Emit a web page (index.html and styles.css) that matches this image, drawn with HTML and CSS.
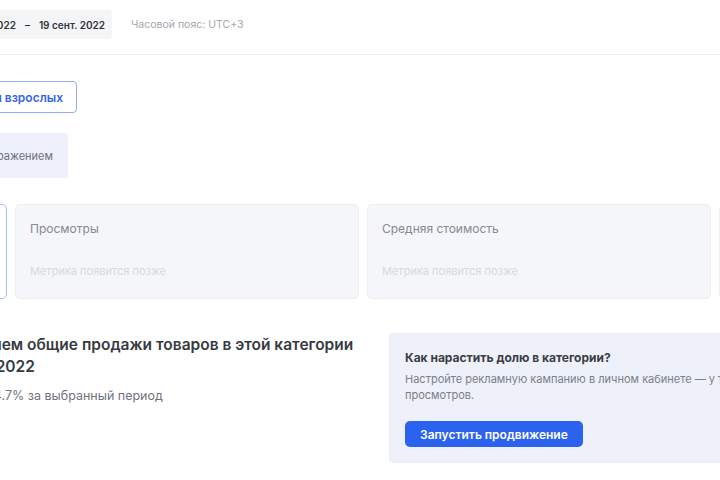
FILE: index.html
```html
<!DOCTYPE html>
<html lang="ru">
<head>
<meta charset="utf-8">
<link rel="stylesheet" href="styles.css">
</head>
<body>
<div class="page">
  <div class="toolbar">
    <div class="period-wrap">
      <div class="period">
        <span>12 сент. 2022</span><span class="dash">–</span><span>19 сент. 2022</span>
      </div>
    </div>
    <div class="tz">Часовой пояс: UTC+3</div>
  </div>

  <div class="filters">
    <button class="outline-btn">Для детей и взрослых</button>
  </div>

  <div class="chips">
    <div class="chip">Только с изображением</div>
  </div>

  <div class="cards">
    <div class="card card-active">
      <div class="card-title">Заказы</div>
      <div class="card-note">Метрика появится позже</div>
    </div>
    <div class="card">
      <div class="card-title">Просмотры</div>
      <div class="card-note">Метрика появится позже</div>
    </div>
    <div class="card">
      <div class="card-title">Средняя стоимость</div>
      <div class="card-note">Метрика появится позже</div>
    </div>
    <div class="card">
      <div class="card-title">Конверсия</div>
      <div class="card-note">Метрика появится позже</div>
    </div>
  </div>

  <div class="bottom">
    <div class="summary">
      <h2 class="summary-title">В среднем общие продажи товаров в этой категории<br>в сент. 2022</h2>
      <p class="summary-sub">Рост на 4.7% за выбранный период</p>
    </div>
    <div class="promo">
      <div class="promo-title">Как нарастить долю в категории?</div>
      <p class="promo-text">Настройте рекламную кампанию в личном кабинете — у товаров станет больше<br>просмотров.</p>
      <button class="promo-btn">Запустить продвижение</button>
    </div>
  </div>
</div>
</body>
</html>
```

FILE: styles.css
```css
* { box-sizing: border-box; }
html, body {
  margin: 0;
  padding: 0;
  background: #ffffff;
  overflow: hidden;
  width: 720px;
  height: 480px;
}
body {
  font-family: Inter, "Noto Sans", "Liberation Sans", sans-serif;
  color: #2f333a;
}
.page {
  width: 720px;
}
.toolbar {
  display: flex;
  align-items: center;
  gap: 19px;
  height: 55px;
  padding-top: 10px;
  padding-bottom: 15px;
  border-bottom: 1px solid #f1f1f3;
}
.period-wrap {
  flex: none;
  width: 112px;
  min-width: 0;
  display: flex;
  justify-content: flex-end;
}
.period {
  flex: none;
  height: 29px;
  display: flex;
  align-items: center;
  padding: 0 7px 0 8px;
  background: #f4f5f7;
  border-radius: 4px;
  font-size: 10px;
  font-weight: 600;
  color: #2f333a;
  white-space: nowrap;
}
.dash { margin: 0 9px; }
.tz {
  font-size: 10.5px;
  color: #a3a7ae;
  white-space: nowrap;
}
.filters {
  margin-top: 26px;
  width: 77px;
  display: flex;
  justify-content: flex-end;
}
.outline-btn {
  flex: none;
  height: 32px;
  padding: 0 13px;
  border: 1px solid #94adf3;
  border-radius: 4px;
  background: #fff;
  color: #3565e6;
  font-family: inherit;
  font-size: 12px;
  font-weight: 600;
  white-space: nowrap;
}
.chips {
  margin-top: 20px;
  width: 68px;
  display: flex;
  justify-content: flex-end;
}
.chip {
  flex: none;
  height: 45px;
  display: flex;
  align-items: center;
  padding: 0 15px;
  background: #eef1fb;
  border-radius: 3px;
  font-size: 11px;
  color: #6b707c;
  white-space: nowrap;
}
.cards {
  margin-top: 26px;
  margin-left: -337px;
  display: flex;
  gap: 8px;
}
.card {
  flex: 0 0 344px;
  height: 95px;
  padding: 16px 14px;
  background: #f4f6f9;
  border: 1px solid #eceef2;
  border-radius: 5px;
  display: flex;
  flex-direction: column;
  justify-content: space-between;
}
.card-active {
  background: #ffffff;
  border-color: #a8bef5;
}
.card-title {
  font-size: 12px;
  color: #858a94;
  line-height: 16px;
}
.card-note {
  font-size: 11px;
  color: #d6d9de;
  line-height: 16px;
  padding-bottom: 3px;
}
.bottom {
  margin-top: 34px;
  display: flex;
  align-items: flex-start;
}
.summary {
  margin-left: -60px;
  flex: 0 0 449px;
}
.summary-title {
  margin: 1px 0 0;
  font-size: 15.5px;
  font-weight: 600;
  line-height: 22px;
  color: #363a41;
  white-space: nowrap;
}
.summary-sub {
  margin: 10px 0 0 4px;
  font-size: 12.5px;
  line-height: 16px;
  color: #6f737c;
  white-space: nowrap;
}
.promo {
  flex: 0 0 420px;
  height: 130px;
  padding: 17px 16px;
  background: #eef1fa;
  border-radius: 4px;
}
.promo-title {
  font-size: 12px;
  font-weight: 700;
  color: #3a3e45;
  line-height: 16px;
}
.promo-text {
  margin: 5px 0 0;
  font-size: 11px;
  line-height: 16px;
  color: #7a7f89;
  white-space: nowrap;
}
.promo-btn {
  margin-top: 18px;
  height: 26px;
  padding: 0 15px;
  border: none;
  border-radius: 5px;
  background: #2b63ef;
  color: #fff;
  font-family: inherit;
  font-size: 12px;
  font-weight: 600;
}
```
